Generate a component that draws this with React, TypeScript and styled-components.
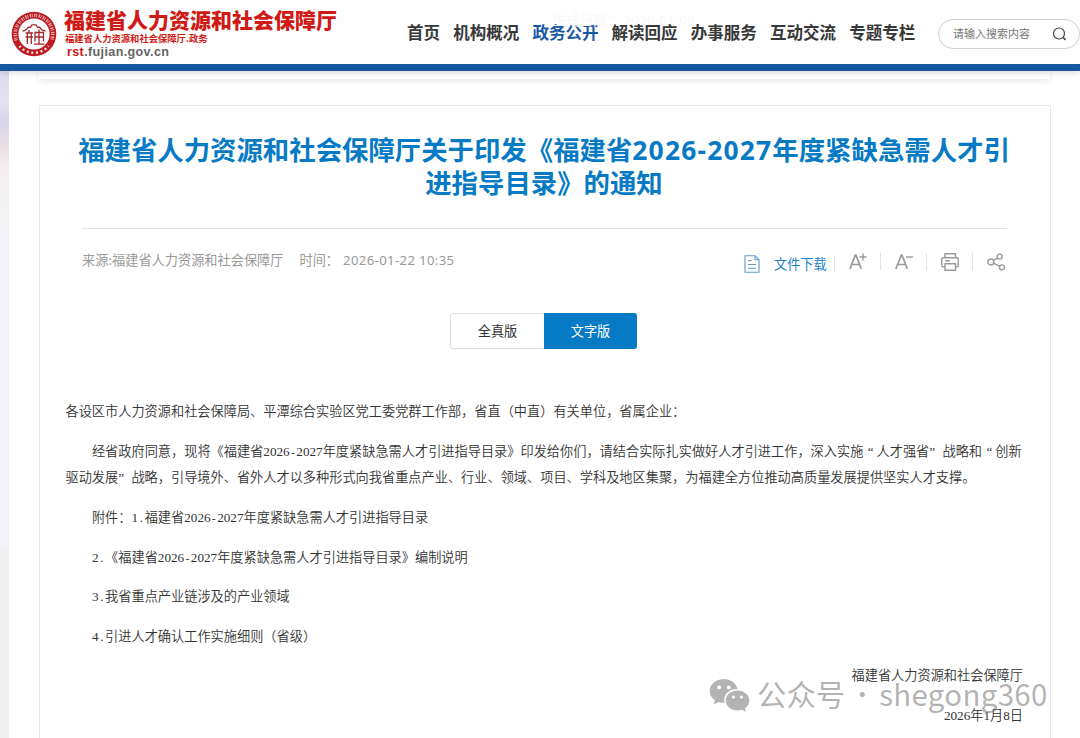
import React from "react";
import styled, { createGlobalStyle } from "styled-components";

const cjk = `"Noto Sans CJK SC", sans-serif`;

const GlobalStyle = createGlobalStyle`
  * { box-sizing: border-box; }
  html, body { margin: 0; padding: 0; overflow: hidden; background: #fff; }
  body { font-family: ${cjk}; text-spacing-trim: space-all; }
  p, h1 { margin: 0; }
`;

const Page = styled.div`
  width: 1080px;
  height: 738px;
  display: flex;
  flex-direction: column;
  overflow: hidden;
`;

const Header = styled.header`
  position: relative;
  z-index: 2;
  height: 71px;
  flex: none;
  display: flex;
  background: #fefefe;
  border-bottom: 7px solid #1858a0;
  box-shadow: 0 1px 7px rgba(70, 50, 90, 0.22);
`;

const Faded = styled.span`
  position: absolute;
  left: 553px;
  top: 10px;
  font: 13.2px/20px "Noto Sans", ${cjk};
  letter-spacing: 0.25px;
  color: #f7f7f7;
  white-space: pre;
`;

const Seal = styled.svg`
  width: 46px;
  height: 46px;
  margin: 11px 7px 0 11px;
  flex: none;
`;

const Brand = styled.div`
  width: 343px;
  flex: none;
  display: flex;
  flex-direction: column;
  white-space: nowrap;
  color: #d01a16;
`;

const BrandName = styled.div`
  margin-top: 6px;
  font-size: 21px;
  line-height: 26px;
  font-weight: 900;
`;

const BrandSub = styled.div`
  margin-left: 1px;
  font-size: 9.3px;
  line-height: 12px;
  font-weight: 700;
`;

const BrandUrl = styled.div`
  margin: 1px 0 0 3px;
  font: 700 12.6px/15px "Liberation Sans", sans-serif;
  letter-spacing: 0.35px;
  color: #666;
  b { color: #d01a16; }
`;

const Nav = styled.nav`
  width: 531px;
  height: 26px;
  margin-top: 19px;
  flex: none;
  display: flex;
  gap: 13.2px;
`;

const NavItem = styled.a<{ $active?: boolean }>`
  font-size: 16.5px;
  line-height: 26px;
  font-weight: 700;
  white-space: nowrap;
  color: ${(p) => (p.$active ? "#1858a4" : "#383838")};
`;

const Search = styled.div`
  width: 142px;
  height: 30px;
  flex: none;
  margin-top: 19px;
  padding: 0 12px 2px 14px;
  display: flex;
  align-items: center;
  justify-content: space-between;
  border: 1px solid #d2d2d2;
  border-radius: 15px;
  font-size: 11px;
  color: #777;
`;

const Content = styled.div`
  flex: 1;
  display: flex;
  min-height: 0;
`;

const Backdrop = styled.div`
  width: 9px;
  flex: none;
  background: linear-gradient(
    #dddcec 0, #e2e1f0 30px, #d8d6e8 50px, #e0dae8 62px, #eadde4 76px,
    #f4eeef 95px, #f5f1f2 120px, #f2f3f8 170px, #f1f3f9 477px, #f0f0f0 478px
  );
`;

const Main = styled.main`
  flex: 1;
  padding-left: 30px;
`;

const UpperPanel = styled.div`
  width: 1011px;
  height: 8px;
  background: #fff;
  box-shadow: 0 2px 7px rgba(0, 0, 0, 0.1);
`;

const Article = styled.article`
  width: 1012px;
  height: 660px;
  margin-top: 26px;
  border: 1px solid #e9e9e9;
`;

const Title = styled.h1`
  margin: 26px 0 0 -2px;
  height: 69px;
  font: 700 26.4px/33px ${cjk};
  text-align: center;
  white-space: nowrap;
  color: #067ac4;
`;

const TitleNumber = styled.span`
  font-family: "Noto Sans", sans-serif;
  line-height: 1;
  letter-spacing: 1.2px;
`;

const MetaBar = styled.div`
  width: 925px;
  margin: 27px 0 0 42px;
  padding-right: 1px;
  border-top: 1px solid #e4e4e4;
  display: flex;
  justify-content: space-between;
  height: 57px;
`;

const Meta = styled.div`
  margin-top: 21px;
  display: flex;
  font: 13.2px/20px ${cjk};
  color: #999;
  white-space: nowrap;
`;

const MetaTime = styled.span`
  margin-left: 16px;
`;

const MetaDate = styled.span`
  margin-left: 4px;
  font-family: "Noto Sans", sans-serif;
  letter-spacing: 0.34px;
`;

const Actions = styled.div`
  display: flex;
  padding-top: 24px;
  color: #999;
  svg { display: block; }
`;

const Download = styled.a`
  display: flex;
  align-items: flex-start;
  gap: 14px;
  margin-top: 2px;
  width: 91px;
  height: 18px;
  font-size: 13.2px;
  line-height: 18px;
  white-space: nowrap;
  color: #1c82ca;
  border-right: 1px solid #e6e6e6;
`;

const Action = styled.span<{ $last?: boolean }>`
  width: ${(p) => (p.$last ? 33 : 46)}px;
  height: 17px;
  padding-left: 14px;
  border-right: ${(p) => (p.$last ? "0" : "1px solid #e2e2e2")};
`;

const Tabs = styled.div`
  width: 187px;
  height: 36px;
  margin: 28px 0 0 410px;
  display: flex;
  border: 1px solid #dedede;
  border-radius: 3px;
`;

const Tab = styled.span<{ $active?: boolean }>`
  flex: 1;
  text-align: center;
  font-size: 13.2px;
  line-height: 34px;
  color: ${(p) => (p.$active ? "#fff" : "#333")};
  ${(p) => p.$active && "background: #067ac4; margin: -1px -1px -1px 0; line-height: 36px; border-radius: 0 3px 3px 0;"}
`;

const Body = styled.div`
  margin: 49.4px 27px 0 25.5px;
  font: 13.2px/26.4px ${cjk};
  font-weight: 350;
  color: #333;
`;

const Paragraph = styled.p<{ $indent?: boolean; $right?: boolean }>`
  margin-bottom: 13.2px;
  white-space: nowrap;
  text-indent: ${(p) => (p.$indent ? "2em" : "0")};
  text-align: ${(p) => (p.$right ? "right" : "left")};
`;

const Half = styled.span<{ $dash?: boolean }>`
  display: inline-block;
  width: 6.6px;
  line-height: 1;
  text-indent: 0;
  text-align: center;
  font-family: ${(p) => (p.$dash ? `"Liberation Mono", monospace` : `"Liberation Serif", serif`)};
  font-size: ${(p) => (p.$dash ? "11px" : "13.2px")};
`;

const Quote = styled.span<{ $open?: boolean }>`
  display: inline-block;
  width: 1em;
  padding-right: ${(p) => (p.$open ? "3px" : "0")};
  line-height: 1;
  text-indent: 0;
  text-align: ${(p) => (p.$open ? "right" : "left")};
  font-family: "Liberation Serif", serif;
`;

const Watermark = styled.div`
  position: absolute;
  left: 709px;
  top: 673px;
  display: flex;
  align-items: center;
  height: 42px;
  color: rgba(120, 120, 120, 0.56);
  font: 29.4px/42px ${cjk};
  white-space: pre;
  svg { flex: none; margin: 1px 7px 0 0; }
  span { margin-top: -2px; }
`;

const WatermarkDot = styled.span`
  width: 34px;
  font-size: 24px;
  text-align: center;
`;

const WatermarkId = styled.span`
  letter-spacing: 0.35px;
`;

/* Latin characters and curly quotes sit on the half/full width grid of the song typeface. */
const Grid = ({ text }: { text: string }) => (
  <>
    {text.split(/([0-9.\-“”])/).map((part, i) => {
      if (/^[0-9.\-]$/.test(part)) return <Half key={i} $dash={part === "-"}>{part}</Half>;
      if (part === "“" || part === "”")
        return <Quote key={i} $open={part === "“"}>{part}</Quote>;
      return part;
    })}
  </>
);

const NAV = ["首页", "机构概况", "政务公开", "解读回应", "办事服务", "互动交流", "专题专栏"];

const SealLogo = () => (
  <Seal viewBox="0 0 46 46">
    <circle cx="23" cy="23" r="22.3" fill="#bd1d22" />
    <path d="M5.300 29.500A18.800 18.800 0 1 1 40.700 29.500" fill="none" stroke="#f3cccc" strokeWidth="3.400" strokeDasharray="1.300 .8 .9 1.500" opacity="0.85" />
    <path d="M8.500 35A18.800 18.800 0 0 0 37.500 35" fill="none" stroke="#fff" strokeWidth="2.400" strokeDasharray="1.900 2.700" opacity="0.9" />
    <circle cx="23" cy="23" r="15.600" fill="#fff" />
    <g fill="none" stroke="#a3282b" strokeWidth="1.300">
      <path d="M11.500 20c2.600-.3 4.700-1.600 5.700-3.800l2.300.2 1.500-2.600h4l1.500 2.600 2.300-.2c1 2.200 3.100 3.500 5.700 3.800" />
      <path d="M18 19v2.500M14.500 22h7.500M16.300 22v11M20.300 22v11M14.500 26h7.500M28 18.500v14.500M24 30.500v-9h8.500v9M24 26h8.500M23 33.200h10.500" />
    </g>
  </Seal>
);

export default function App() {
  return (
    <Page lang="zh-CN">
      <GlobalStyle />
      <Header>
        <Faded>生成日期： 2026-01-08</Faded>
        <SealLogo />
        <Brand>
          <BrandName>福建省人力资源和社会保障厅</BrandName>
          <BrandSub>福建省人力资源和社会保障厅.政务</BrandSub>
          <BrandUrl><b>rst</b>.fujian.gov.cn</BrandUrl>
        </Brand>
        <Nav>
          {NAV.map((label) => (
            <NavItem key={label} $active={label === "政务公开"}>{label}</NavItem>
          ))}
        </Nav>
        <Search>
          请输入搜索内容
          <svg width="15" height="15" viewBox="0 0 15 15" fill="none" stroke="#444" strokeWidth="1.2">
            <circle cx="7" cy="7.500" r="5.500" />
            <path d="M11 11.500l2.600 2.400" strokeWidth="1.600" />
          </svg>
        </Search>
      </Header>
      <Content>
        <Backdrop />
        <Main>
          <UpperPanel />
          <Article>
            <Title>
              福建省人力资源和社会保障厅关于印发《福建省<TitleNumber>2026-2027</TitleNumber>年度紧缺急需人才引
              <br />
              进指导目录》的通知
            </Title>
            <MetaBar>
              <Meta>
                <span>来源:福建省人力资源和社会保障厅</span>
                <MetaTime>时间：</MetaTime>
                <MetaDate>2026-01-22 10:35</MetaDate>
              </Meta>
              <Actions>
                <Download>
                  <svg width="16" height="18" viewBox="0 0 16 18" fill="none" stroke="#5b98d4" strokeWidth="1.100">
                    <path d="M1 .7h10l4 4v12.600H1zM11 .7v4h4M4 5.500h3.500M4 9.500h8M4 13.300h8" />
                  </svg>
                  文件下载
                </Download>
                <Action>
                  <svg width="18" height="18" viewBox="0 0 18 18" fill="none" stroke="#999" strokeWidth="1.700">
                    <path d="M.8 16L6.300 2.200h.6L12.400 16M2.600 11.500h8" />
                    <path d="M10.500 4h7M14 .5v7" strokeWidth="1.400" />
                  </svg>
                </Action>
                <Action>
                  <svg width="18" height="18" viewBox="0 0 18 18" fill="none" stroke="#999" strokeWidth="1.700">
                    <path d="M.8 16L6.300 2.200h.6L12.400 16M2.600 11.500h8" />
                    <path d="M11 4h7" strokeWidth="1.400" />
                  </svg>
                </Action>
                <Action>
                  <svg width="18" height="18" viewBox="0 0 18 18" fill="none" stroke="#999" strokeWidth="1.400">
                    <path d="M4 4.800V.8h10.500v4M4 13.800H2.200a1.400 1.400 0 0 1-1.400-1.400V6.200a1.400 1.400 0 0 1 1.400-1.400h13.600a1.400 1.400 0 0 1 1.400 1.400v6.200a1.400 1.400 0 0 1-1.400 1.400h-1.300M4 10.800h10.500v6.400H4zM4 7.800h5" />
                  </svg>
                </Action>
                <Action $last>
                  <svg width="18" height="18" viewBox="0 0 18 18" fill="none" stroke="#999" strokeWidth="1.400">
                    <circle cx="3.800" cy="9" r="3" />
                    <circle cx="12.700" cy="3.600" r="2.500" />
                    <circle cx="15" cy="14.400" r="2.500" />
                    <path d="M6.400 7.500l4.200-2.600M6.600 10.200l6.200 3.100" />
                  </svg>
                </Action>
              </Actions>
            </MetaBar>
            <Tabs>
              <Tab>全真版</Tab>
              <Tab $active>文字版</Tab>
            </Tabs>
            <Body>
              <Paragraph>各设区市人力资源和社会保障局、平潭综合实验区党工委党群工作部，省直（中直）有关单位，省属企业：</Paragraph>
              <Paragraph $indent>
                <Grid text="经省政府同意，现将《福建省2026-2027年度紧缺急需人才引进指导目录》印发给你们，请结合实际扎实做好人才引进工作，深入实施“人才强省”战略和“创新" />
                <br />
                <Grid text="驱动发展”战略，引导境外、省外人才以多种形式向我省重点产业、行业、领域、项目、学科及地区集聚，为福建全方位推动高质量发展提供坚实人才支撑。" />
              </Paragraph>
              <Paragraph $indent><Grid text="附件：1.福建省2026-2027年度紧缺急需人才引进指导目录" /></Paragraph>
              <Paragraph $indent><Grid text="2.《福建省2026-2027年度紧缺急需人才引进指导目录》编制说明" /></Paragraph>
              <Paragraph $indent><Grid text="3.我省重点产业链涉及的产业领域" /></Paragraph>
              <Paragraph $indent><Grid text="4.引进人才确认工作实施细则（省级）" /></Paragraph>
              <Paragraph $right>福建省人力资源和社会保障厅</Paragraph>
              <Paragraph $right><Grid text="2026年1月8日" /></Paragraph>
            </Body>
          </Article>
        </Main>
      </Content>
      <Watermark>
        <svg width="41" height="34" viewBox="0 0 41 34">
          <path fill="currentColor" fillRule="evenodd" d="M15 1C7 1 .7 6.300.7 13c0 3.800 2 7 5.200 9.200L4.500 26.500l5-2.600c1.700.5 3.600.9 5.600.9h.6c-2.300-7.500 4.100-14 12.900-13.700C27.200 5.200 21.600 1 15 1zM10.200 7.500a1.900 1.900 0 1 1 0 3.800 1.900 1.900 0 0 1 0-3.800zm9.600 0a1.900 1.900 0 1 1 0 3.800 1.900 1.900 0 0 1 0-3.800z" />
          <path fill="currentColor" fillRule="evenodd" d="M28.500 12.500c-6.600 0-11.800 4.400-11.800 10s5.200 10 11.800 10c1.600 0 3.100-.3 4.500-.7l4 2.100-1.200-3.600c2.800-1.800 4.500-4.700 4.500-7.800 0-5.600-5.200-10-11.800-10zM24.500 17.500a1.600 1.600 0 1 1 0 3.200 1.600 1.600 0 0 1 0-3.200zm8 0a1.600 1.600 0 1 1 0 3.200 1.600 1.600 0 0 1 0-3.200z" />
        </svg>
        <span>公众号</span><WatermarkDot>·</WatermarkDot><WatermarkId>shegong360</WatermarkId>
      </Watermark>
    </Page>
  );
}
